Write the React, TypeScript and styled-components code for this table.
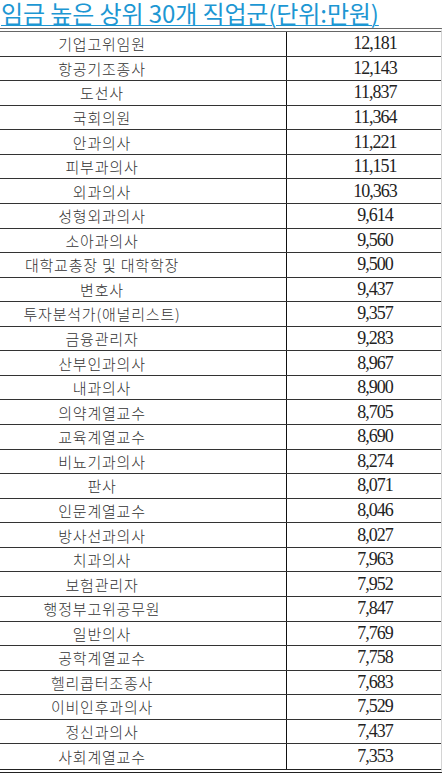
import styled, { createGlobalStyle } from "styled-components";

const GlobalStyle = createGlobalStyle`
  html, body {
    margin: 0;
    padding: 0;
    background: #ffffff;
  }
`;

const Page = styled.div`
  width: 445px;
  height: 777px;
  overflow: hidden;
  background: #ffffff;
`;

const Title = styled.h1`
  margin: 0;
  padding: 0 0 0 1px;
  box-sizing: border-box;
  height: 28px;
  font-family: "Noto Sans CJK KR", "Noto Sans", sans-serif;
  font-size: 24px;
  font-weight: 400;
  line-height: 26px;
  letter-spacing: -0.1px;
  white-space: nowrap;
  color: #1d97d3;
  text-decoration: underline;
  text-decoration-thickness: 1px;
  text-underline-offset: 2px;
`;

const Table = styled.div`
  width: 441px;
  border-top: 4px double #666;
  border-bottom: 4px double #222;
  border-right: 1px solid #d4d4d4;
`;

const Row = styled.div<{ $last?: boolean }>`
  display: grid;
  grid-template-columns: 287px 1fr;
  box-sizing: border-box;
  height: 24.57px;
  border-bottom: ${(p) => (p.$last ? "none" : "1px solid #333")};
`;

const JobCell = styled.div`
  display: flex;
  align-items: center;
  justify-content: center;
  padding-right: 82px;
  border-right: 1px solid #111;
  font-family: "Noto Sans CJK KR", "Noto Sans", sans-serif;
  font-size: 15px;
  font-weight: 300;
  letter-spacing: 0.8px;
  color: #333;
  white-space: nowrap;
`;

const PayCell = styled.div`
  display: flex;
  align-items: center;
  justify-content: center;
  padding-left: 22px;
  font-family: "Liberation Serif", "DejaVu Serif", serif;
  font-size: 18px;
  letter-spacing: -1px;
  color: #222;
`;

const rows: [string, string][] = [
  ["기업고위임원", "12,181"],
  ["항공기조종사", "12,143"],
  ["도선사", "11,837"],
  ["국회의원", "11,364"],
  ["안과의사", "11,221"],
  ["피부과의사", "11,151"],
  ["외과의사", "10,363"],
  ["성형외과의사", "9,614"],
  ["소아과의사", "9,560"],
  ["대학교총장 및 대학학장", "9,500"],
  ["변호사", "9,437"],
  ["투자분석가(애널리스트)", "9,357"],
  ["금융관리자", "9,283"],
  ["산부인과의사", "8,967"],
  ["내과의사", "8,900"],
  ["의약계열교수", "8,705"],
  ["교육계열교수", "8,690"],
  ["비뇨기과의사", "8,274"],
  ["판사", "8,071"],
  ["인문계열교수", "8,046"],
  ["방사선과의사", "8,027"],
  ["치과의사", "7,963"],
  ["보험관리자", "7,952"],
  ["행정부고위공무원", "7,847"],
  ["일반의사", "7,769"],
  ["공학계열교수", "7,758"],
  ["헬리콥터조종사", "7,683"],
  ["이비인후과의사", "7,529"],
  ["정신과의사", "7,437"],
  ["사회계열교수", "7,353"],
];

export default function App() {
  return (
    <Page>
      <GlobalStyle />
      <Title>임금 높은 상위 30개 직업군(단위:만원)</Title>
      <Table>
        {rows.map(([job, pay], i) => (
          <Row key={job} $last={i === rows.length - 1}>
            <JobCell>{job}</JobCell>
            <PayCell>{pay}</PayCell>
          </Row>
        ))}
      </Table>
    </Page>
  );
}
